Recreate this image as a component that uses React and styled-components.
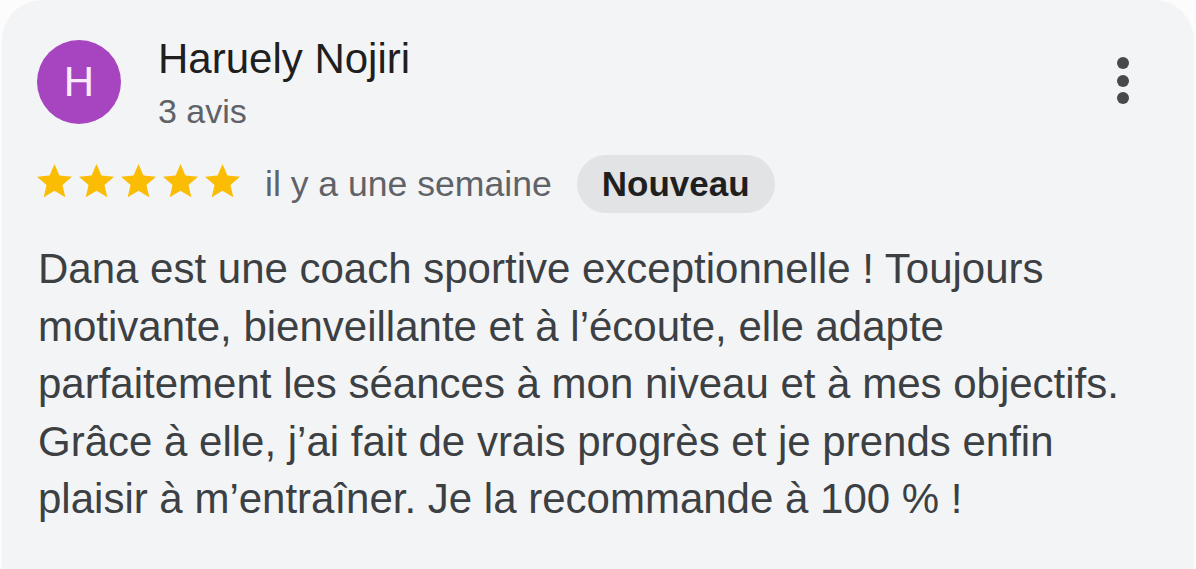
import React from "react";
import styled, { createGlobalStyle } from "styled-components";

const Global = createGlobalStyle`
  html, body { margin: 0; padding: 0; background: #fcfcfd; overflow: hidden; }
  body { font-family: "Liberation Sans", Arial, sans-serif; }
`;

const Card = styled.div`
  margin: 0 2px;
  background: #f3f4f6;
  border-radius: 40px 40px 0 0;
  min-height: 100vh;
  padding: 35px 65px 0 35px;
  box-sizing: border-box;
`;

const Header = styled.div`
  display: flex;
  align-items: flex-start;
`;

const Avatar = styled.div`
  width: 84px;
  height: 84px;
  border-radius: 50%;
  background: #a745c0;
  color: #fbeafd;
  display: flex;
  align-items: center;
  justify-content: center;
  font-size: 42px;
  margin-top: 5px;
  flex-shrink: 0;
`;

const Who = styled.div`
  display: flex;
  flex-direction: column;
  margin-left: 37px;
`;

const Name = styled.div`
  font-size: 42px;
  line-height: 48px;
  color: #1f1f1f;
`;

const Count = styled.div`
  font-size: 34px;
  line-height: 40px;
  color: #5f6368;
  margin-top: 8px;
`;

const Dots = styled.div`
  margin-left: auto;
  margin-top: 22px;
  display: flex;
  flex-direction: column;
  gap: 5.5px;
`;

const Dot = styled.span`
  width: 12px;
  height: 12px;
  border-radius: 50%;
  background: #47494c;
`;

const Meta = styled.div`
  display: flex;
  align-items: center;
  gap: 25px;
  margin-top: 24px;
`;

const Stars = styled.div`
  display: flex;
  gap: 7px;
  margin-bottom: 7px;
`;

const When = styled.span`
  font-size: 35.6px;
  color: #5f6368;
`;

const Pill = styled.span`
  height: 58px;
  padding: 0 25px;
  border-radius: 29px;
  background: #e2e3e5;
  color: #1f1f1f;
  font-weight: 700;
  font-size: 35px;
  display: flex;
  align-items: center;
`;

const Body = styled.p`
  margin: 27px 0 0 1px;
  font-size: 42px;
  line-height: 57.5px;
  color: #3c4043;
`;

const Star = () => (
  <svg width="35" height="33.8" viewBox="2 2 20 19.3">
    <path
      fill="#fbbc04"
      d="M12 17.27L18.18 21l-1.64-7.03L22 9.24l-7.19-.61L12 2 9.19 8.63 2 9.24l5.46 4.73L5.82 21z"
    />
  </svg>
);

export default function App() {
  return (
    <>
      <Global />
      <Card>
        <Header>
          <Avatar>H</Avatar>
          <Who>
            <Name>Haruely Nojiri</Name>
            <Count>3 avis</Count>
          </Who>
          <Dots>
            <Dot />
            <Dot />
            <Dot />
          </Dots>
        </Header>
        <Meta>
          <Stars>
            {[0, 1, 2, 3, 4].map((i) => (
              <Star key={i} />
            ))}
          </Stars>
          <When>il y a une semaine</When>
          <Pill>Nouveau</Pill>
        </Meta>
        <Body>
          Dana est une coach sportive exceptionnelle ! Toujours motivante,
          bienveillante et à l’écoute, elle adapte parfaitement les séances à
          mon niveau et à mes objectifs. Grâce à elle, j’ai fait de vrais
          progrès et je prends enfin plaisir à m’entraîner. Je la recommande à
          100 % !
        </Body>
      </Card>
    </>
  );
}
